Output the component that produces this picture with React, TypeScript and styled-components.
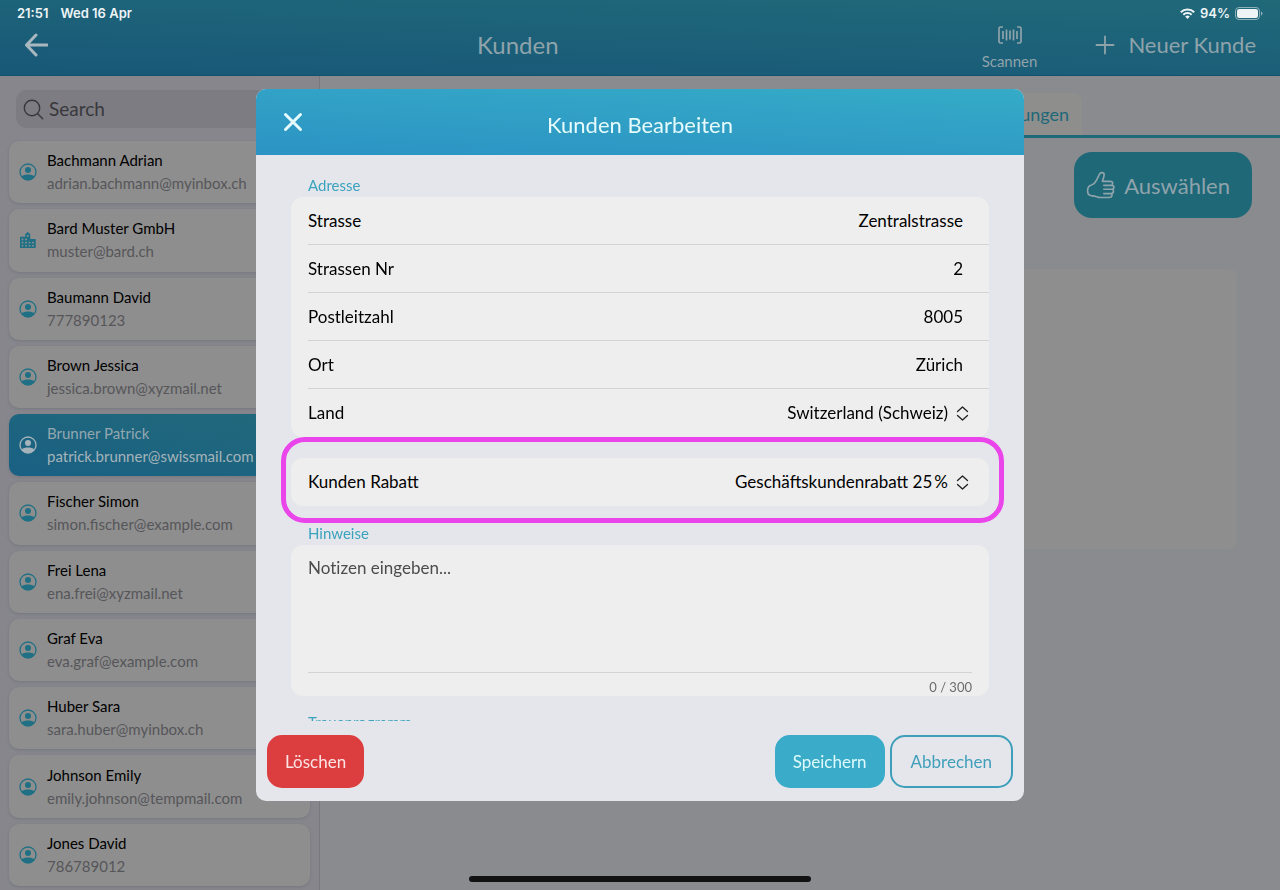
import React from 'react';
import styled, { createGlobalStyle, css } from 'styled-components';

const GlobalStyle = createGlobalStyle`
  *, *::before, *::after { box-sizing: border-box; }
  body { margin: 0; background: #8a8b8f; font-family: Lato, "Liberation Sans", sans-serif; color: #000; overflow: hidden; }
  button, input, select, textarea { font: inherit; color: inherit; margin: 0; }
  h1, h2, p, ul { margin: 0; padding: 0; font-weight: 400; }
`;

const Shell = styled.div`
  display: flex;
  flex-direction: column;
  height: 100vh;
`;

const TopBar = styled.header`
  display: flex;
  flex-direction: column;
  height: 76px;
  flex: none;
  background: linear-gradient(182deg, #206979 0%, #185878 100%);
  border-bottom: 1px solid #15506d;
  color: #8fa3ab;
`;

const StatusBar = styled.div`
  display: flex;
  align-items: center;
  gap: 12px;
  height: 26px;
  padding: 0 17px;
  font: 600 13px/26px Inter, sans-serif;
  color: #eef4f6;
`;

const StatusRight = styled.div`
  display: flex;
  align-items: center;
  gap: 5px;
  margin-left: auto;
`;

const NavRow = styled.div`
  display: flex;
  align-items: center;
  height: 38px;
  padding: 0 24px;
`;

const PlainButton = styled.button`
  display: flex;
  align-items: center;
  padding: 0;
  border: 0;
  background: none;
  cursor: pointer;
`;

const PageTitle = styled.h1`
  flex: 1;
  padding-left: 6px;
  text-align: center;
  font-size: 24px;
  line-height: 30px;
`;

const ScanButton = styled(PlainButton)`
  flex-direction: column;
  gap: 7px;
  margin-right: 58px;
  padding-top: 6px;
  font-size: 15px;
  line-height: 20px;
`;

const NewButton = styled(PlainButton)`
  gap: 13px;
  font-size: 22px;
  line-height: 30px;
`;

const Columns = styled.div`
  display: flex;
  flex: 1;
  min-height: 0;
`;

const Sidebar = styled.aside`
  display: flex;
  flex-direction: column;
  width: 25%;
  padding: 14px 9px 4px;
  border-right: 1px solid #78797e;
  background: #86868c;
`;

const SearchBox = styled.label`
  display: flex;
  align-items: center;
  gap: 5px;
  height: 38px;
  flex: none;
  margin: 0 7px 13px;
  padding: 0 7px;
  border-radius: 11px;
  background: #7d7c82;
  color: #38383c;
`;

const SearchInput = styled.input`
  min-width: 0;
  flex: 1;
  padding: 0;
  border: 0;
  outline: 0;
  background: none;
  font-size: 19px;
  line-height: 24px;
  &::placeholder { color: #38383c; opacity: 1; }
`;

const CustomerList = styled.ul`
  display: grid;
  grid-auto-rows: 1fr;
  gap: 6px;
  flex: 1;
  min-height: 0;
  list-style: none;
`;

const CustomerCard = styled.button<{ $active?: boolean }>`
  display: flex;
  align-items: center;
  gap: 10px;
  width: 100%;
  height: 100%;
  padding: 0 10px;
  border: 0;
  border-radius: 10px;
  text-align: left;
  background: #8e8e8e;
  box-shadow: 0 1px 3px rgba(90, 90, 110, 0.35);
  color: #1f7084;
  ${(p) =>
    p.$active &&
    css`
      background: linear-gradient(192deg, #21697a 0%, #1a6084 100%);
      color: #a5b4ba;
    `}
`;

const CardText = styled.span`
  display: flex;
  flex-direction: column;
  min-width: 0;
`;

const CardName = styled.span<{ $active?: boolean }>`
  font-size: 15px;
  line-height: 23px;
  color: ${(p) => (p.$active ? '#93a7af' : '#000')};
`;

const CardMail = styled.span<{ $active?: boolean }>`
  font-size: 15px;
  line-height: 23px;
  color: ${(p) => (p.$active ? '#a5b4ba' : '#56565a')};
`;

const Main = styled.main`
  display: flex;
  flex-direction: column;
  flex: 1;
  min-width: 0;
`;

const Tabs = styled.nav`
  display: flex;
  justify-content: flex-end;
  padding: 17px 198px 0 0;
  border-bottom: 3px solid #1f6878;
`;

const Tab = styled.button`
  height: 42px;
  padding: 0 13px;
  border: 0;
  border-radius: 8px 8px 0 0;
  background: #8e8e8d;
  color: #1f6878;
  font-size: 18px;
`;

const SelectButton = styled(PlainButton)`
  align-self: flex-end;
  gap: 9px;
  height: 66px;
  margin: 14px 28px 51px;
  padding: 0 22px 0 12px;
  border-radius: 18px;
  background: #1f6878;
  color: #8fa3ab;
  font-size: 22px;
`;

const DetailPanel = styled.section`
  height: 280px;
  margin: 0 43px;
  border-radius: 8px;
  background: #8e8e8e;
`;

const Overlay = styled.div`
  position: fixed;
  inset: 0;
  display: flex;
  align-items: center;
  justify-content: center;
`;

const Dialog = styled.div`
  display: flex;
  flex-direction: column;
  width: 60%;
  height: 80%;
  border-radius: 10px;
  overflow: hidden;
  background: #e5e6eb;
`;

const DialogHeader = styled.header`
  display: flex;
  align-items: center;
  height: 66px;
  flex: none;
  padding: 6px 27px 0;
  background: linear-gradient(183deg, #35abc7 0%, #2c93c4 100%);
  color: #e6fbff;
`;

const CloseButton = styled(PlainButton)`
  padding-bottom: 6px;
`;

const DialogTitle = styled.h2`
  flex: 1;
  padding-right: 20px;
  text-align: center;
  font-size: 22px;
  line-height: 30px;
`;

const FormArea = styled.form`
  display: flex;
  flex-direction: column;
  flex: 1;
  min-height: 0;
  padding: 20px 35px 0;
  overflow: hidden;
`;

const SectionTitle = styled.label`
  padding-left: 17px;
  font-size: 15px;
  line-height: 20px;
  color: #3aa3bd;
`;

const Group = styled.div`
  position: relative;
  flex: none;
  margin: 2px 0 21px;
  padding-left: 17px;
  border-radius: 12px;
  background: #eeeeee;
`;

const Row = styled.div`
  display: flex;
  align-items: center;
  height: 48px;
  font-size: 17px;
  line-height: 24px;
  &:not(:last-child) { border-bottom: 1px solid #d3d3d5; }
`;

const RowLabel = styled.label`
  flex: none;
`;

const RowInput = styled.input`
  flex: 1;
  min-width: 0;
  height: 40px;
  padding: 0 26px 0 0;
  border: 0;
  outline: 0;
  background: none;
  text-align: right;
`;

const SelectWrap = styled.div`
  display: flex;
  align-items: center;
  flex: 1;
  gap: 8px;
  min-width: 0;
  padding-right: 20px;
`;

const RowSelect = styled.select`
  flex: 1;
  min-width: 0;
  height: 40px;
  padding: 0;
  border: 0;
  outline: 0;
  appearance: none;
  background: none;
  text-align: right;
  text-align-last: right;
`;

const Highlight = styled.div`
  position: absolute;
  inset: -21px -15px -17px -10px;
  border: 5px solid #ea45ea;
  border-radius: 24px;
  pointer-events: none;
`;

const DiscountGroup = styled(Group)`
  margin: 0 0 17px;
`;

const NotesGroup = styled(Group)`
  display: flex;
  flex-direction: column;
  height: 151px;
  margin-bottom: 16px;
  padding: 11px 17px 0;
`;

const Notes = styled.textarea`
  flex: 1;
  padding: 0;
  border: 0;
  border-bottom: 1px solid #d3d3d5;
  outline: 0;
  resize: none;
  background: none;
  font-size: 17px;
  line-height: 24px;
  font-variant-ligatures: none;
  &::placeholder { color: #4c4c4e; opacity: 1; }
`;

const Counter = styled.span`
  align-self: flex-end;
  padding-top: 5px;
  font-size: 13px;
  line-height: 18px;
  color: #6c6c6e;
`;

const Footer = styled.footer`
  display: flex;
  gap: 5px;
  flex: none;
  padding: 14px 11px 13px;
`;

const tones = {
  danger: css`
    margin-right: auto;
    padding: 0 16px;
    border-color: #dc3e40;
    background: #dc3e40;
    color: #fbe3e4;
  `,
  primary: css`
    padding: 0 16px;
    border-color: #3aabc8;
    background: #3aabc8;
    color: #dffaff;
  `,
  outline: css`
    padding: 0 19px;
    border-color: #3f9fba;
    background: transparent;
    color: #3f9fba;
  `,
};

const ActionButton = styled.button<{ $tone: keyof typeof tones }>`
  height: 53px;
  border: 2px solid;
  border-radius: 15px;
  font-size: 17px;
  ${(p) => tones[p.$tone]}
`;

const HomeIndicator = styled.div`
  position: fixed;
  left: 50%;
  bottom: 8px;
  width: 342px;
  height: 6px;
  margin-left: -171px;
  border-radius: 3px;
  background: #121213;
`;

const PersonIcon = () => (
  <svg width="18" height="18" viewBox="0 0 18 18" aria-hidden="true">
    <circle cx="9" cy="9" r="8" fill="none" stroke="currentColor" strokeWidth="1.3" />
    <circle cx="9" cy="7" r="3" fill="currentColor" />
    <path d="M2.500 13.600C4 12 6.600 11.500 9 11.500s5 .5 6.500 2.100C14 16 11.600 17 9 17s-5-1-6.500-3.400z" fill="currentColor" />
  </svg>
);

const CompanyIcon = () => (
  <svg width="18" height="18" viewBox="0 0 18 18" aria-hidden="true">
    <path d="M1 5.800h5.200V3L8.700 1 11.200 3v5h5.500V17H1z" fill="currentColor" />
    <path
      d="M2.700 7.500h1.600v1.700H2.700zM2.700 10.700h1.600v1.700H2.700zM2.700 13.900h1.600v1.700H2.700zM6.200 7.500h1.600v1.700H6.200zM6.200 10.700h1.600v1.700H6.200zM6.200 13.900h1.600v1.700H6.200zM9.700 10.700h1.600v1.700H9.700zM9.700 13.900h1.600v1.700H9.700zM13.200 10.700h1.600v1.700h-1.600zM13.200 13.900h1.600v1.700h-1.600zM7.900 4h1.600v1.700H7.900z"
      fill="#8e8e8e"
    />
  </svg>
);

const BackIcon = () => (
  <svg width="24" height="24" viewBox="0 0 24 24" fill="none" stroke="#a9b8be" strokeWidth="3" strokeLinecap="round" strokeLinejoin="round" aria-hidden="true">
    <path d="M23 12H2.500M12 2L2.500 12l9.500 10" />
  </svg>
);

const BarcodeIcon = () => (
  <svg width="24" height="18" viewBox="0 0 24 18" fill="none" stroke="currentColor" strokeWidth="1.700" aria-hidden="true">
    <path d="M5 1H2.500Q1 1 1 2.500v13Q1 17 2.500 17H5M19 1h2.500Q23 1 23 2.500v13q0 1.500-1.500 1.500H19" />
    <path d="M5 5v8M8.500 3.500v11M12 4.500v9M15.500 3.500v11M19 5v8" />
  </svg>
);

const PlusIcon = () => (
  <svg width="20" height="20" viewBox="0 0 20 20" fill="none" stroke="currentColor" strokeWidth="1.8" strokeLinecap="round" aria-hidden="true">
    <path d="M10 1.500v17M1.500 10h17" />
  </svg>
);

const SearchIcon = () => (
  <svg width="21" height="21" viewBox="0 0 21 21" fill="none" stroke="currentColor" strokeWidth="1.400" strokeLinecap="round" aria-hidden="true">
    <circle cx="9" cy="9" r="7.700" />
    <path d="M14.700 14.700l5 5" />
  </svg>
);

const ThumbIcon = () => (
  <svg width="29" height="28" viewBox="440 515 88 84" fill="none" stroke="currentColor" strokeWidth="5" strokeLinecap="round" strokeLinejoin="round" aria-hidden="true">
    <path d="M511 595H484C474 595 470 590 460 590C450 590 445 586 445 577V572C445 562 450 559 457 557C466 554 468 550 472 542L481 524C484 517 496 518 495 527C495 532 491 540 490 546H514C523 546 523 558 515 558H494M515 558H518C527 558 527 570 518 570H494M518 570C526 570 525 583 516 583H494M516 583C521 585 520 595 511 595" />
  </svg>
);

const CloseIcon = () => (
  <svg width="20" height="20" viewBox="0 0 20 20" fill="none" stroke="currentColor" strokeWidth="3" strokeLinecap="round" aria-hidden="true">
    <path d="M2.500 2.500l15 15M17.500 2.500l-15 15" />
  </svg>
);

const UpDownIcon = () => (
  <svg width="13" height="15" viewBox="0 0 13 15" fill="none" stroke="#222" strokeWidth="1.300" strokeLinecap="round" strokeLinejoin="round" aria-hidden="true">
    <path d="M1.500 5.500l5-4.500 5 4.500M1.500 9.500l5 4.500 5-4.500" />
  </svg>
);

const WifiIcon = () => (
  <svg width="15" height="11" viewBox="0 0 15 11" fill="none" stroke="currentColor" strokeWidth="2" aria-hidden="true">
    <path d="M.8 4.200a9.500 9.500 0 0 1 13.400 0M3.300 6.800a6 6 0 0 1 8.400 0" />
    <path d="M5.200 8.600a3.300 3.300 0 0 1 4.600 0L7.500 11z" fill="currentColor" stroke="none" />
  </svg>
);

const BatteryIcon = () => (
  <svg width="28" height="13" viewBox="0 0 28 13" aria-hidden="true">
    <rect x=".5" y=".5" width="24" height="12" rx="3.500" fill="none" stroke="#8fb0ba" />
    <rect x="2" y="2" width="21" height="9" rx="2.200" fill="currentColor" />
    <path d="M26 4.500q1.500.500 1.500 2t-1.500 2z" fill="#8fb0ba" />
  </svg>
);

type Customer = { name: string; mail: string; company?: boolean; active?: boolean };

const customers: Customer[] = [
  { name: 'Bachmann Adrian', mail: 'adrian.bachmann@myinbox.ch' },
  { name: 'Bard Muster GmbH', mail: 'muster@bard.ch', company: true },
  { name: 'Baumann David', mail: '777890123' },
  { name: 'Brown Jessica', mail: 'jessica.brown@xyzmail.net' },
  { name: 'Brunner Patrick', mail: 'patrick.brunner@swissmail.com', active: true },
  { name: 'Fischer Simon', mail: 'simon.fischer@example.com' },
  { name: 'Frei Lena', mail: 'ena.frei@xyzmail.net' },
  { name: 'Graf Eva', mail: 'eva.graf@example.com' },
  { name: 'Huber Sara', mail: 'sara.huber@myinbox.ch' },
  { name: 'Johnson Emily', mail: 'emily.johnson@tempmail.com' },
  { name: 'Jones David', mail: '786789012' },
];

const addressFields = [
  { id: 'street', label: 'Strasse', value: 'Zentralstrasse' },
  { id: 'number', label: 'Strassen Nr', value: '2' },
  { id: 'zip', label: 'Postleitzahl', value: '8005' },
  { id: 'city', label: 'Ort', value: 'Zürich' },
];

function SelectRow({ id, label, value }: { id: string; label: string; value: string }) {
  return (
    <Row>
      <RowLabel htmlFor={id}>{label}</RowLabel>
      <SelectWrap>
        <RowSelect id={id} defaultValue={value}>
          <option>{value}</option>
        </RowSelect>
        <UpDownIcon />
      </SelectWrap>
    </Row>
  );
}

export default function App() {
  return (
    <>
      <GlobalStyle />
      <Shell>
        <TopBar>
          <StatusBar>
            <span>21:51</span>
            <span>Wed 16 Apr</span>
            <StatusRight>
              <WifiIcon />
              <span>94%</span>
              <BatteryIcon />
            </StatusRight>
          </StatusBar>
          <NavRow>
            <PlainButton aria-label="Zurück">
              <BackIcon />
            </PlainButton>
            <PageTitle>Kunden</PageTitle>
            <ScanButton>
              <BarcodeIcon />
              Scannen
            </ScanButton>
            <NewButton>
              <PlusIcon />
              Neuer Kunde
            </NewButton>
          </NavRow>
        </TopBar>
        <Columns>
          <Sidebar>
            <SearchBox>
              <SearchIcon />
              <SearchInput type="text" placeholder="Search" aria-label="Search" />
            </SearchBox>
            <CustomerList>
              {customers.map((c) => (
                <li key={c.name}>
                  <CustomerCard $active={c.active}>
                    {c.company ? <CompanyIcon /> : <PersonIcon />}
                    <CardText>
                      <CardName $active={c.active}>{c.name}</CardName>
                      <CardMail $active={c.active}>{c.mail}</CardMail>
                    </CardText>
                  </CustomerCard>
                </li>
              ))}
            </CustomerList>
          </Sidebar>
          <Main>
            <Tabs>
              <Tab>Bestellungen</Tab>
            </Tabs>
            <SelectButton>
              <ThumbIcon />
              Auswählen
            </SelectButton>
            <DetailPanel />
          </Main>
        </Columns>
      </Shell>
      <Overlay>
        <Dialog role="dialog" aria-modal="true" aria-labelledby="dialog-title">
          <DialogHeader>
            <CloseButton aria-label="Schliessen">
              <CloseIcon />
            </CloseButton>
            <DialogTitle id="dialog-title">Kunden Bearbeiten</DialogTitle>
          </DialogHeader>
          <FormArea>
            <SectionTitle as="p">Adresse</SectionTitle>
            <Group>
              {addressFields.map((f) => (
                <Row key={f.id}>
                  <RowLabel htmlFor={f.id}>{f.label}</RowLabel>
                  <RowInput id={f.id} type="text" defaultValue={f.value} />
                </Row>
              ))}
              <SelectRow id="country" label="Land" value="Switzerland (Schweiz)" />
            </Group>
            <DiscountGroup>
              <Highlight />
              <SelectRow id="discount" label="Kunden Rabatt" value={'Geschäftskundenrabatt 25\u2009%'} />
            </DiscountGroup>
            <SectionTitle htmlFor="notes">Hinweise</SectionTitle>
            <NotesGroup>
              <Notes id="notes" placeholder="Notizen eingeben..." />
              <Counter>0 / 300</Counter>
            </NotesGroup>
            <SectionTitle as="p">Treueprogramm</SectionTitle>
          </FormArea>
          <Footer>
            <ActionButton $tone="danger">Löschen</ActionButton>
            <ActionButton $tone="primary">Speichern</ActionButton>
            <ActionButton $tone="outline">Abbrechen</ActionButton>
          </Footer>
        </Dialog>
      </Overlay>
      <HomeIndicator />
    </>
  );
}
